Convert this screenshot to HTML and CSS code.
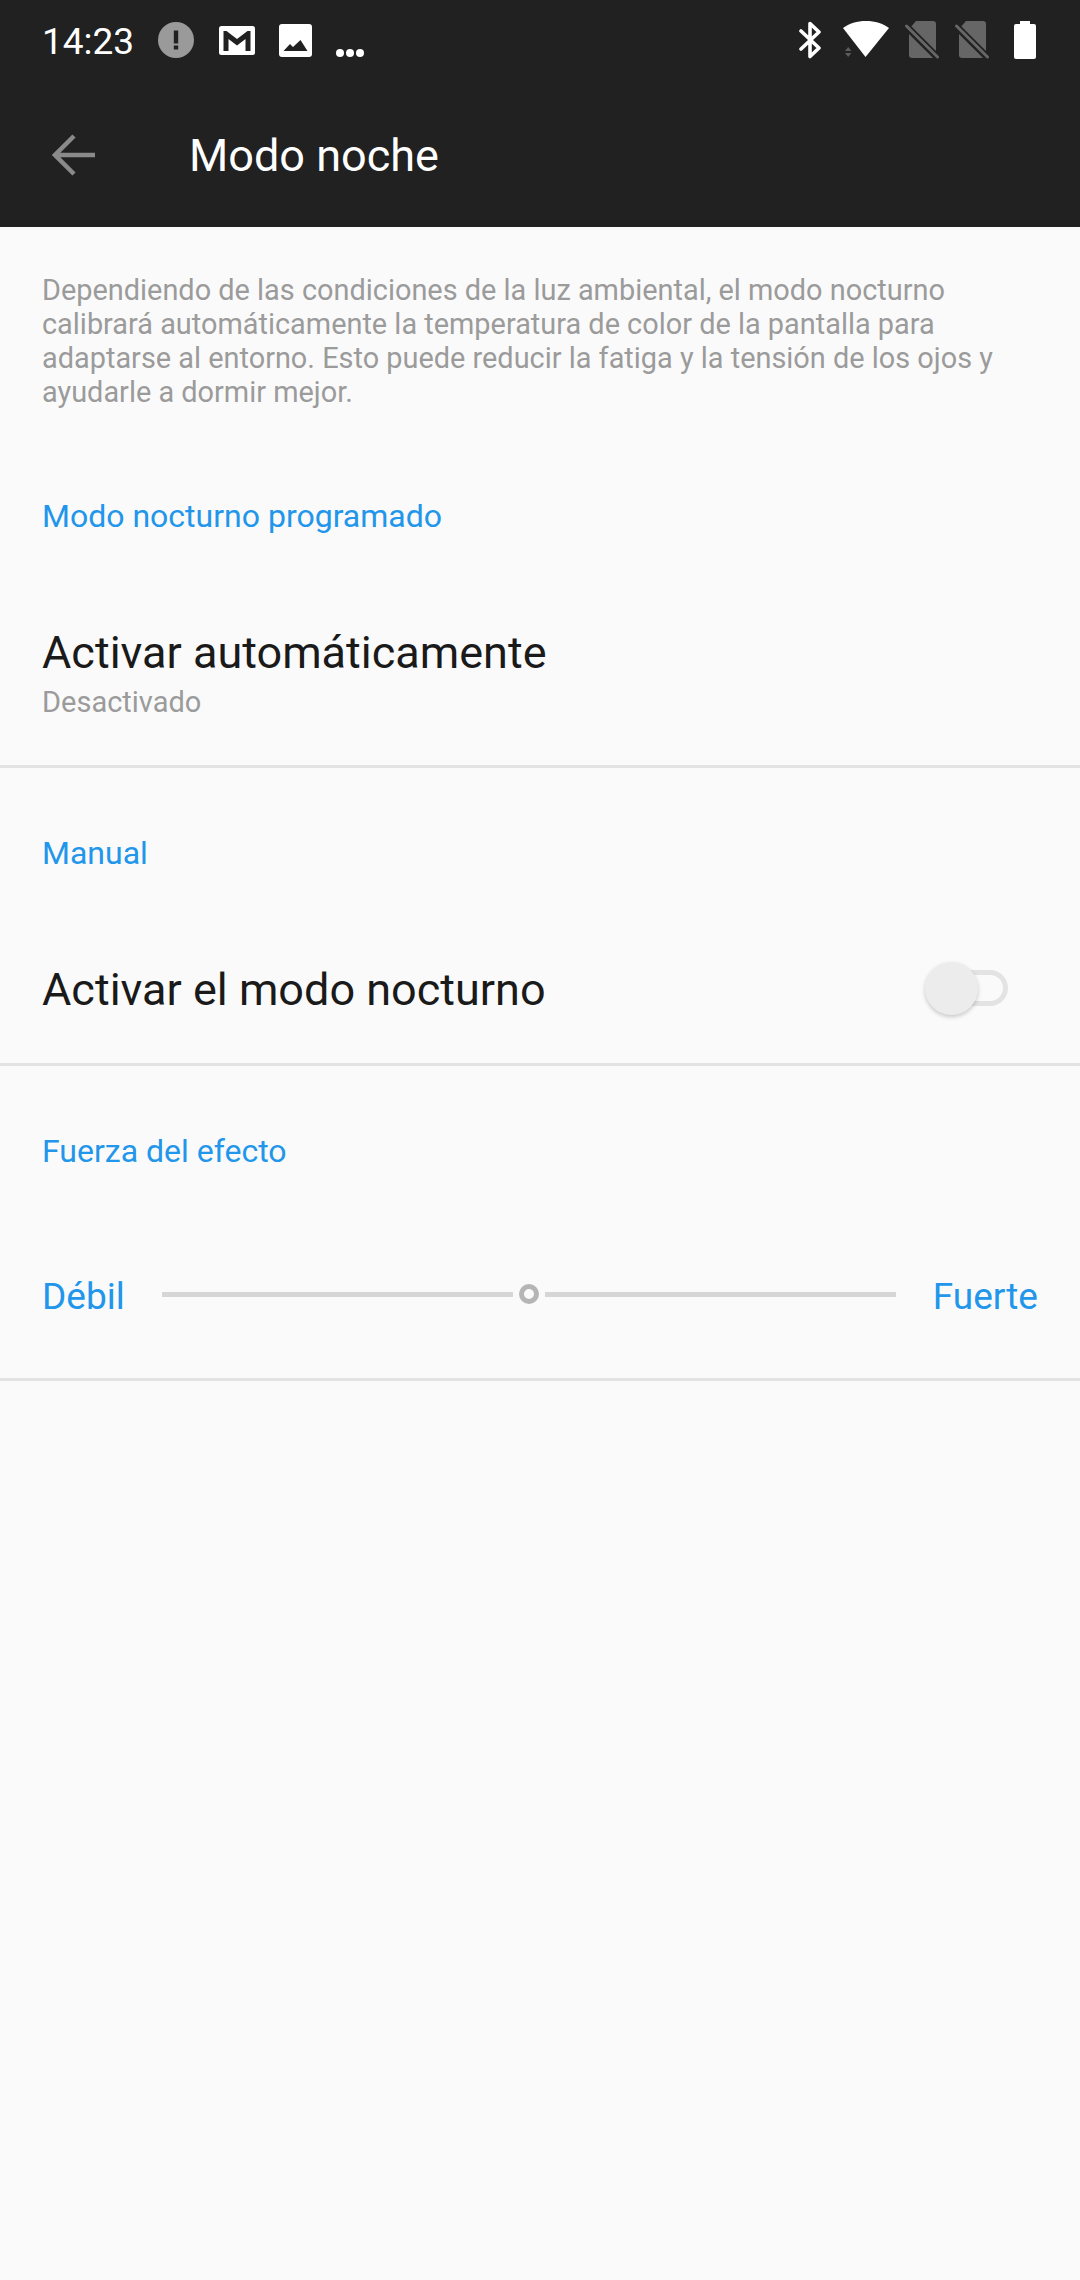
FILE: index.html
```html
<!DOCTYPE html>
<html lang="es">
<head>
    <meta charset="UTF-8">
    <title>Modo noche</title>
    <link rel="stylesheet" href="styles.css">
</head>
<body>
    <div class="statusbar">
        <span class="clock">14:23</span>
        <svg class="ic-alert" width="36" height="36" viewBox="0 0 36 36"><circle cx="18" cy="18" r="18" fill="#9a9a9a"/><rect x="15.800" y="8.500" width="4.400" height="13" fill="#212121"/><rect x="15.800" y="23.500" width="4.400" height="4" fill="#212121"/></svg>
        <svg class="ic-mail" width="36" height="29" viewBox="0 0 36 29"><rect width="36" height="29" rx="2.500" fill="#fff"/><path d="M4.500 5h3L18 13l10.500-8h3v20h-5V13L18 19.500 9.500 13v12h-5z" fill="#212121"/></svg>
        <svg class="ic-image" width="33" height="33" viewBox="0 0 33 33"><rect width="33" height="33" rx="3" fill="#fff"/><path d="M4.500 27l6.500-7 3 3 7.500-7 7 11z" fill="#212121"/></svg>
        <span class="more"><i></i><i></i><i></i></span>
        <span class="spacer"></span>
        <svg class="ic-bt" width="24" height="38" viewBox="0 0 24 38"><path d="M2 10l18 17-9 8.500V2.500l9 8.500L2 28" fill="none" stroke="#fff" stroke-width="3.600" stroke-linejoin="round" stroke-linecap="round"/></svg>
        <svg class="ic-wifi" width="46" height="38" viewBox="0 0 46 38"><path d="M0 7C6 2.500 14 0 23 0s17 2.500 23 7L22.500 36z" fill="#fff"/><path d="M2 30l3.200-4 3.200 4zM2 32h6.400l-3.200 4z" fill="#5d5d5d"/></svg>
        <svg class="ic-sim" width="36" height="38" viewBox="0 0 36 38"><path d="M11 0h17a3 3 0 0 1 3 3v31a3 3 0 0 1-3 3H7a3 3 0 0 1-3-3V8z" fill="#666"/><path d="M0 4l33 33" stroke="#212121" stroke-width="7"/><path d="M1.500 5l31 31" stroke="#666" stroke-width="3" stroke-linecap="round"/></svg>
        <svg class="ic-sim" width="36" height="38" viewBox="0 0 36 38"><path d="M11 0h17a3 3 0 0 1 3 3v31a3 3 0 0 1-3 3H7a3 3 0 0 1-3-3V8z" fill="#666"/><path d="M0 4l33 33" stroke="#212121" stroke-width="7"/><path d="M1.500 5l31 31" stroke="#666" stroke-width="3" stroke-linecap="round"/></svg>
        <svg class="ic-battery" width="22" height="38" viewBox="0 0 22 38"><path d="M6 0h10v3h4a2 2 0 0 1 2 2v31a2 2 0 0 1-2 2H2a2 2 0 0 1-2-2V5a2 2 0 0 1 2-2h4z" fill="#fff"/></svg>
    </div>

    <div class="toolbar">
        <svg class="back" width="44" height="44" viewBox="0 0 44 44"><path d="M43 22H4M22 3L3 22l19 19" fill="none" stroke="#8a8a8a" stroke-width="4.500"/></svg>
        <h1>Modo noche</h1>
    </div>

    <div class="content">
        <p class="intro">Dependiendo de las condiciones de la luz ambiental, el modo nocturno calibrará automáticamente la temperatura de color de la pantalla para adaptarse al entorno. Esto puede reducir la fatiga y la tensión de los ojos y ayudarle a dormir mejor.</p>

        <div class="section-title first">Modo nocturno programado</div>
        <div class="row row-auto">
            <div class="row-title">Activar automáticamente</div>
            <div class="row-sub">Desactivado</div>
        </div>

        <div class="section-title">Manual</div>
        <div class="row row-switch">
            <div class="row-title">Activar el modo nocturno</div>
            <div class="switch"><div class="knob"></div></div>
        </div>

        <div class="section-title">Fuerza del efecto</div>
        <div class="row row-slider">
            <span class="slider-label">Débil</span>
            <div class="slider">
                <div class="track"></div>
                <div class="thumb"></div>
                <div class="track"></div>
            </div>
            <span class="slider-label">Fuerte</span>
        </div>
    </div>
</body>
</html>
```

FILE: styles.css
```css
* {
    box-sizing: border-box;
}
html, body {
    margin: 0;
    padding: 0;
}
body {
    width: 1080px;
    height: 2280px;
    overflow: hidden;
    font-family: Roboto, "Noto Sans", sans-serif;
    background-color: #fafafa;
}
.statusbar {
    display: flex;
    align-items: center;
    height: 80px;
    padding: 0 44px 0 42px;
    background-color: #212121;
}
.clock {
    color: #fff;
    font-size: 37px;
    width: 116px;
    margin-top: 2px;
}
.statusbar svg {
    flex: none;
}
.ic-alert {
    margin-right: 25px;
}
.ic-mail {
    margin-right: 24px;
}
.ic-image {
    margin-right: 24px;
}
.more {
    display: flex;
    gap: 2px;
    align-self: flex-end;
    margin-bottom: 23px;
}
.more i {
    display: block;
    width: 8px;
    height: 8px;
    border-radius: 50%;
    background-color: #fff;
}
.spacer {
    flex: 1;
}
.ic-bt {
    margin-right: 20px;
}
.ic-wifi {
    margin-right: 16px;
}
.ic-sim {
    margin-right: 14px;
}
.ic-battery {
    margin-left: 9px;
}
.toolbar {
    display: flex;
    align-items: center;
    height: 147px;
    padding: 0 0 0 52px;
    background-color: #212121;
}
.back {
    margin-top: 2px;
}
.toolbar h1 {
    margin: 3px 0 0 0;
    padding-left: 93px;
    color: #fff;
    font-size: 45px;
    font-weight: 400;
}
.content {
    padding-top: 46px;
}
.intro {
    margin: 0;
    padding: 0 42px;
    color: #9b9b9b;
    font-size: 28.9px;
    line-height: 34px;
}
.section-title {
    padding: 0 42px;
    color: #2196ea;
    font-size: 32px;
    line-height: 36px;
    margin-top: 67px;
}
.section-title.first {
    margin-top: 89px;
}
.row {
    margin-top: 43px;
    padding: 0 42px;
    border-bottom: 3px solid #e3e3e3;
}
.row-title {
    color: #1a1a1a;
    font-size: 45px;
    line-height: 50px;
}
.row-sub {
    color: #9b9b9b;
    font-size: 29px;
    line-height: 34px;
    margin-top: 7px;
}
.row-auto {
    padding-top: 51px;
    height: 191px;
}
.row-switch {
    display: flex;
    align-items: center;
    justify-content: space-between;
    margin-top: 45px;
    height: 150px;
}
.switch {
    position: relative;
    width: 66px;
    height: 36px;
    margin: 0 30px 4px 0;
    border: 5px solid #e3e3e3;
    border-radius: 18px;
}
.knob {
    position: absolute;
    left: -22px;
    top: -13px;
    width: 53px;
    height: 53px;
    border-radius: 50%;
    background-color: #ececec;
    box-shadow: 0 2px 4px rgba(0, 0, 0, 0.2);
}
.row-slider {
    display: flex;
    align-items: center;
    margin-top: 45px;
    height: 167px;
}
.slider-label {
    color: #2196ea;
    font-size: 37px;
}
.slider {
    flex: 1;
    display: flex;
    align-items: center;
    margin: 0 37px 4px;
}
.track {
    flex: 1;
    height: 5px;
    background-color: #d6d6d6;
}
.thumb {
    width: 20px;
    height: 20px;
    margin: 0 6px;
    border: 5px solid #b5b5b5;
    border-radius: 50%;
}
```
